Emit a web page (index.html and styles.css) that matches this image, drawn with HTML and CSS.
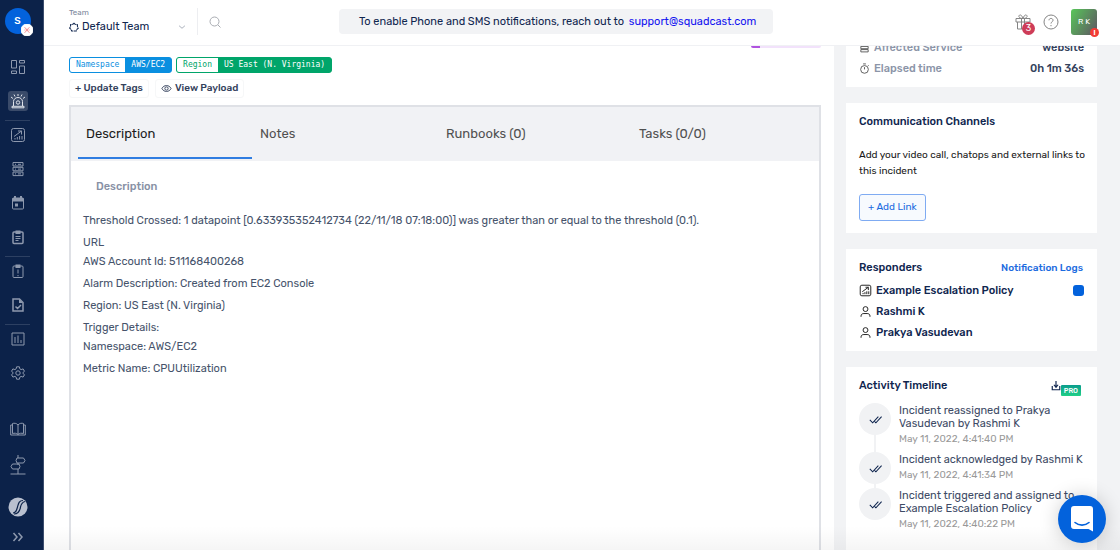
FILE: index.html
```html
<!DOCTYPE html>
<html lang="en">
	<head>
		<meta charset="utf-8">
		<title>Incident</title>
		<link rel="stylesheet" href="styles.css">
	</head>
	<body>
		<svg class="defs" aria-hidden="true">
			<symbol id="policy" viewBox="0 0 16 16"><rect x="1.500" y="1.500" width="13" height="13" rx="2"/><path d="M4 9.500L11.500 4M8 4h3.500v3.500M5 12.500v-1.500M7.300 12.500v-2.500M9.600 12.500V9M12 12.500V9"/></symbol>
			<symbol id="user" viewBox="0 0 16 16"><circle cx="8" cy="5" r="3"/><path d="M2.500 14.500v-1c0-2 1.500-3 3.500-3h4c2 0 3.500 1 3.500 3v1"/></symbol>
			<symbol id="checks" viewBox="0 0 16 16"><path d="M1 8.500l3.500 3.500 7-7.500M6.500 10l2 2 7-7.500"/></symbol>
		</svg>
		<div class="app">
			<aside class="sidebar">
				<a class="org" href="#" aria-label="Organization">S
					<svg class="org-badge" viewBox="0 0 12 12"><circle cx="6" cy="6" r="6" fill="#fff"/><path d="M3.500 3.500c1.500 0 3.500 5 5 5M3.500 8.500c1.500 0 3.500-5 5-5M3.500 6h1M7.500 6h1" stroke="#f58a8d" fill="none"/></svg>
				</a>
				<ul class="nav">
					<li><a href="#" aria-label="Dashboard"><svg viewBox="0 0 16 16"><path d="M1.500 1.500h5v7.500h-5zM1.500 12h5v2.500h-5zM9.500 1.500h5v2.500h-5zM9.500 7h5v7.500h-5z"/></svg></a></li>
					<li><a class="active" href="#" aria-label="Incidents"><svg viewBox="0 0 16 16"><path d="M3.500 13V8.500a4.500 4 0 0 1 9 0V13M2 14.800v-1.500h12v1.500zM8 1v2M4 1.500l1 2M12 1.500l-1 2M1 4l2 1.500M15 4l-2 1.500"/><circle cx="8" cy="9.500" r="1.700"/></svg></a></li>
					<li class="split"><a href="#" aria-label="Escalation policies"><svg><use href="#policy"/></svg></a></li>
					<li><a href="#" aria-label="Services"><svg viewBox="0 0 16 16"><path d="M3 1.500h10v3.500H3zM3 6.300h10v3.500H3zM3 11.100h10v3.500H3zM5 3.300h1M5 8.100h1M5 12.900h1M8 3.300h3M8 8.100h3M8 12.900h3"/></svg></a></li>
					<li><a href="#" aria-label="Schedules"><svg viewBox="0 0 16 16"><rect x="2.500" y="3" width="11" height="11" rx="1"/><path class="fill" d="M2.500 3h11v3.500h-11zM4 1h2v3H4zM10 1h2v3h-2zM5 8.500h3v3H5z"/></svg></a></li>
					<li><a href="#" aria-label="Postmortems"><svg viewBox="0 0 16 16"><rect class="bold" x="3" y="3" width="10" height="11.500" rx="1"/><path class="fill" d="M5.500 1.500h5v3.500h-5z"/><path d="M5.500 7.500h5M5.500 9.500h5M5.500 11.500h3"/></svg></a></li>
					<li class="split"><a href="#" aria-label="Runbooks"><svg viewBox="0 0 16 16"><rect x="3" y="3" width="10" height="11.500" rx="1"/><path class="fill" d="M5.500 1.500h5v3.500h-5z"/><path d="M8 6.500v4M8 12v1.200"/></svg></a></li>
					<li><a href="#" aria-label="Status page"><svg viewBox="0 0 16 16"><path class="bold" d="M3 2h6.500L13 5.500V14H3zM5.500 9.500l2 2L11 8"/><path class="fill" d="M9 2v4h4z"/></svg></a></li>
					<li class="split"><a href="#" aria-label="Analytics"><svg viewBox="0 0 16 16"><path d="M2 2h12v12H2zM5 12V6M8 12V4.500M11 12V9"/></svg></a></li>
					<li><a href="#" aria-label="Settings"><svg viewBox="0 0 16 16"><circle cx="8" cy="8" r="2.200"/><path d="M6.600 1.800h2.800l.4 2 1.300.8 2-.7 1.400 2.400-1.600 1.300v.8l1.600 1.300-1.400 2.400-2-.7-1.300.8-.4 2H6.600l-.4-2-1.300-.8-2 .7-1.400-2.400 1.600-1.300v-.8L1.500 6.300l1.400-2.400 2 .7 1.300-.8z"/></svg></a></li>
				</ul>
				<ul class="nav nav-bottom">
					<li><a href="#" aria-label="Docs"><svg viewBox="0 0 16 16"><path d="M8 4C6.500 2 4 2 2.500 2.500v10C4.500 12 6.500 12 8 13.500 9.500 12 11.500 12 13.500 12.500v-10C12 2 9.500 2 8 4v9.500M2.500 4H.7v10h14.600V4h-1.800"/></svg></a></li>
					<li><a href="#" aria-label="Guides"><svg class="tall" viewBox="0 0 16 20"><path d="M8 0v3M8 8v2M8 14v5M.5 19h15M7 3h6.500L15 5.500 13.500 8H7L6 5.500zM9 9H2.500L1 11.500 2.500 14H9l1-2.500z"/></svg></a></li>
					<li class="brand-item"><a href="#" aria-label="Squadcast"><svg class="brand" viewBox="0 0 20 20"><circle cx="10" cy="10" r="9.500" fill="#b9c0cf" stroke="none"/><path d="M15 3.500c-4 0-4.500 3-5.500 6.500s-1.500 6-4.500 6" stroke="#0c2249" stroke-width="1.200"/><path d="M17 4.500c-4 1-4 3.500-4.700 6.500s-2.300 6-6.300 6" stroke="#0c2249" stroke-width="1.200"/></svg></a></li>
					<li><a href="#" aria-label="Expand menu"><svg viewBox="0 0 16 16"><path class="bold" d="M3.500 4L7 8l-3.500 4M8.500 4L12 8l-3.500 4"/></svg></a></li>
				</ul>
			</aside>

			<div class="page">
				<header class="header">
					<div class="team">
						<label for="team">Team</label>
						<div class="team-select">
							<svg viewBox="0 0 12 12"><path d="M6 1.500l1.500 1.300 2.500.3.200 2.500 1 1.800-1.700 1.500-.7 1.800H6 3.200l-.7-1.800L.8 7.400l1-1.800L2 3.100l2.500-.3z" stroke-width="1.300" stroke-dasharray="3.500 .7"/></svg>
							<select id="team"><option>Default Team</option></select>
							<svg class="chevron" viewBox="0 0 12 12"><path d="M2.500 4.500L6 7.500l3.500-3"/></svg>
						</div>
					</div>
					<button class="search" aria-label="Search"><svg viewBox="0 0 12 12"><circle cx="5.500" cy="5.500" r="4.500"/><path d="M9 9l2.500 2.500"/></svg></button>
					<p class="banner">To enable Phone and SMS notifications, reach out to <a href="#">support@squadcast.com</a></p>
					<div class="tools">
						<button class="gift" aria-label="What's new"><svg viewBox="0 0 16 16"><path d="M1 4.500h14V8H1zM2.500 8v7h11V8M6.500 4.500V15M9.500 4.500V15M8 4.500C3 4.500 3 .8 5.500 1 7 1.200 8 4.500 8 4.500S9 1.200 10.500 1C13 .8 13 4.500 8 4.500z"/></svg><span class="count">3</span></button>
						<button aria-label="Help"><svg viewBox="0 0 16 16"><circle cx="8" cy="8" r="7"/><path d="M6 6.300c0-2.500 4-2.500 4 0C10 7.800 8 7.800 8 9.500M8 11v1.200"/></svg></button>
						<a class="avatar" href="#">R K<span class="alert">!</span></a>
					</div>
				</header>

				<div class="body">
					<main class="content">
						<div class="status-chip"></div>
						<div class="tags">
							<span class="tag"><span class="key">Namespace</span><span class="value">AWS/EC2</span></span>
							<span class="tag green"><span class="key">Region</span><span class="value">US East (N. Virginia)</span></span>
						</div>
						<div class="tag-actions">
							<button>+ Update Tags</button>
							<button><svg viewBox="0 0 12 12"><path d="M1 6c2-4.300 8-4.300 10 0-2 4.300-8 4.300-10 0z"/><circle cx="6" cy="6" r="1.800"/></svg>View Payload</button>
						</div>
						<section class="panel">
							<div class="tabs" role="tablist">
								<button class="tab active" role="tab">Description</button>
								<button class="tab" role="tab">Notes</button>
								<button class="tab" role="tab">Runbooks (0)</button>
								<button class="tab" role="tab">Tasks (0/0)</button>
							</div>
							<div class="description">
								<h2>Description</h2>
								<p>Threshold Crossed: 1 datapoint [0.633935352412734 (22/11/18 07:18:00)] was greater than or equal to the threshold (0.1).</p>
								<p>URL<br>AWS Account Id: 511168400268</p>
								<p>Alarm Description: Created from EC2 Console</p>
								<p>Region: US East (N. Virginia)</p>
								<p>Trigger Details:<br>Namespace: AWS/EC2</p>
								<p>Metric Name: CPUUtilization</p>
							</div>
						</section>
					</main>

					<aside class="side">
						<section class="card facts">
							<dl>
								<div>
									<dt><svg viewBox="0 0 12 12"><path d="M2 1.500h8v2.500H2zM2 4.800h8v2.500H2zM2 8.300h8v2.500H2z"/></svg>Affected Service</dt>
									<dd>website</dd>
								</div>
								<div>
									<dt><svg viewBox="0 0 12 12"><circle cx="6" cy="7" r="4.200"/><path d="M6 4.500V7M4.500 1h3M10 2.500l.8.8"/></svg>Elapsed time</dt>
									<dd>0h 1m 36s</dd>
								</div>
							</dl>
						</section>
						<section class="card">
							<h3>Communication Channels</h3>
							<p>Add your video call, chatops and external links to this incident</p>
							<button class="add-link">+ Add Link</button>
						</section>
						<section class="card responders">
							<div class="card-head">
								<h3>Responders</h3>
								<a href="#">Notification Logs</a>
							</div>
							<ul>
								<li><svg><use href="#policy"/></svg>Example Escalation Policy<span class="marker"></span></li>
								<li><svg><use href="#user"/></svg>Rashmi K</li>
								<li><svg><use href="#user"/></svg>Prakya Vasudevan</li>
							</ul>
						</section>
						<section class="card timeline">
							<div class="card-head">
								<h3>Activity Timeline</h3>
								<button class="download" aria-label="Download"><svg viewBox="0 0 12 12"><path d="M6 0v7M3.500 4.500L6 7.500l2.500-3M1.500 6v4.500h9V6"/></svg><span class="pro">PRO</span></button>
							</div>
							<ol>
								<li>
									<span class="dot"><svg><use href="#checks"/></svg></span>
									<div><p>Incident reassigned to Prakya Vasudevan by Rashmi K</p><time>May 11, 2022, 4:41:40 PM</time></div>
								</li>
								<li>
									<span class="dot"><svg><use href="#checks"/></svg></span>
									<div><p>Incident acknowledged by Rashmi K</p><time>May 11, 2022, 4:41:34 PM</time></div>
								</li>
								<li>
									<span class="dot"><svg><use href="#checks"/></svg></span>
									<div><p>Incident triggered and assigned to Example Escalation Policy</p><time>May 11, 2022, 4:40:22 PM</time></div>
								</li>
							</ol>
						</section>
					</aside>
				</div>
			</div>
		</div>
		<button class="chat" aria-label="Open chat"><svg viewBox="0 0 24 28"><path d="M4 1h16a3 3 0 0 1 3 3v22.500L18.500 24H4a3 3 0 0 1-3-3V4a3 3 0 0 1 3-3z" fill="#fff"/><path d="M5 17.500c4 3.500 10 3.500 14 0" stroke="#0362dc" stroke-width="1.600" stroke-linecap="round" fill="none"/></svg></button>
	</body>
</html>
```
FILE: styles.css
```css
* {
	margin: 0;
	padding: 0;
	box-sizing: border-box;
}
body {
	font-family: Rubik, Roboto, "Liberation Sans", sans-serif;
	font-size: 11px;
	color: #10264f;
	background-color: #fff;
	overflow: hidden;
}
ul, ol {
	list-style: none;
}
a {
	text-decoration: none;
}
button, select {
	font: inherit;
	color: inherit;
	border: none;
	background: none;
	cursor: pointer;
}
svg {
	display: block;
	flex: none;
	fill: none;
	stroke: currentColor;
}
.defs {
	position: absolute;
	width: 0;
	height: 0;
}
.app {
	display: flex;
	height: 100vh;
}

/* sidebar */
.sidebar {
	flex: none;
	width: 44px;
	padding: 8px 8px 0 0;
	background-color: #0c2249;
	border-right: 1px solid #3c4d6d;
}
.org {
	position: relative;
	display: block;
	width: 26px;
	margin: 0 auto;
	border-radius: 50%;
	background-color: #0362dc;
	color: #fff;
	font-size: 10px;
	font-weight: 500;
	line-height: 26px;
	text-align: center;
}
.org-badge {
	position: absolute;
	right: -2px;
	bottom: -2px;
	width: 12px;
	height: 12px;
}
.nav {
	margin-top: 18px;
	padding: 0 5px;
}
.nav li {
	height: 34px;
	padding-top: 5px;
}
.nav .split {
	padding-top: 4px;
	border-top: 1px solid #2d4062;
}
.nav a {
	display: flex;
	align-items: center;
	justify-content: center;
	width: 20px;
	height: 20px;
	margin: 0 auto;
	border-radius: 3px;
	color: #8e99ae;
}
.nav .active {
	color: #dfe3ea;
	background-color: #3a4b6a;
}
.nav svg {
	width: 16px;
	height: 16px;
}
.nav .fill {
	fill: currentColor;
	stroke: none;
}
.nav .bold {
	stroke-width: 1.5;
}
.nav-bottom {
	margin-top: 22px;
}
.nav-bottom li {
	height: 36px;
}
.nav-bottom .brand-item {
	padding-top: 11px;
}
.nav-bottom .tall, .nav-bottom .brand {
	height: 20px;
}
.nav-bottom .brand {
	width: 20px;
}

/* header */
.page {
	position: relative;
	flex: 1;
	min-width: 0;
	display: flex;
	flex-direction: column;
}
.page::after {
	content: "";
	position: absolute;
	left: 0;
	right: 0;
	bottom: 0;
	height: 24px;
	background: linear-gradient(transparent, rgba(0, 0, 0, .04));
	pointer-events: none;
}
.header {
	flex: none;
	display: flex;
	align-items: center;
	height: 46px;
	padding: 0 23px 2px 25px;
	background-color: #fff;
	border-bottom: 1px solid #f0f1f4;
	z-index: 1;
}
.team {
	width: 129px;
	padding-right: 10px;
	border-right: 1px solid #edeef1;
}
.team label {
	display: block;
	font-size: 8px;
	line-height: 10px;
	color: #7c879c;
}
.team-select {
	display: flex;
	align-items: center;
	gap: 3px;
	padding-top: 1px;
}
.team-select svg {
	width: 10px;
	height: 10px;
}
.team-select .chevron {
	color: #9aa1ae;
}
.team select {
	flex: 1;
	min-width: 0;
	appearance: none;
	line-height: 16px;
}
.search {
	margin-left: 11px;
	color: #a9acb2;
}
.search svg {
	width: 12px;
	height: 12px;
}
.banner {
	margin: 0 auto 0 118px;
	padding: 0 17px 0 20px;
	border-radius: 4px;
	background-color: #f2f3f5;
	line-height: 25px;
	white-space: nowrap;
}
.banner a {
	margin-left: 2px;
	color: #1414f0;
}
.tools {
	display: flex;
	align-items: center;
	gap: 12px;
	color: #858585;
}
.tools svg {
	width: 16px;
	height: 16px;
}
.gift {
	position: relative;
}
.count, .alert {
	position: absolute;
	border-radius: 50%;
	color: #fff;
	text-align: center;
}
.count {
	right: -4px;
	bottom: -5px;
	width: 13px;
	font-size: 9px;
	line-height: 13px;
	background-color: #ce3c58;
}
.avatar {
	position: relative;
	width: 26px;
	border-radius: 3px;
	background: linear-gradient(120deg, #57c759, #5f5363);
	color: #fff;
	font-size: 8px;
	line-height: 26px;
	text-align: center;
}
.alert {
	right: -2px;
	bottom: -2px;
	width: 9px;
	font-size: 7px;
	font-weight: 700;
	line-height: 9px;
	background-color: #f23c35;
}

/* incident */
.body {
	flex: 1;
	min-height: 0;
	display: flex;
}
.content {
	flex: 1;
	min-width: 0;
	display: flex;
	flex-direction: column;
	margin-top: -20px;
	padding: 0 13px 0 25px;
}
.status-chip {
	flex: none;
	align-self: flex-end;
	width: 70px;
	height: 22px;
	border-radius: 2px;
	background: linear-gradient(90deg, #b053df 9px, #f2e2fb 9px);
}
.tags {
	display: flex;
	gap: 4px;
	margin-top: 9px;
}
.tag {
	display: flex;
	border: 1px solid #0a8fe0;
	border-radius: 3px;
	background-color: #0a8fe0;
	color: #0a8fe0;
	font-family: "DejaVu Sans Mono", monospace;
	font-size: 8px;
	line-height: 14px;
}
.tag span {
	padding: 0 6px;
}
.tag .key {
	border-radius: 2px 0 0 2px;
	background-color: #fff;
}
.tag .value {
	color: #fff;
}
.tag.green {
	border-color: #00a56a;
	background-color: #00a56a;
	color: #00a56a;
}
.tag-actions {
	display: flex;
	gap: 6px;
	margin-top: 6px;
}
.tag-actions button {
	display: flex;
	align-items: center;
	gap: 3px;
	padding: 0 5px;
	border: 1px solid #f6f7f8;
	border-radius: 3px;
	color: #33415c;
	font-size: 10px;
	font-weight: 500;
	line-height: 17px;
}
.tag-actions svg {
	width: 11px;
	height: 11px;
}
.panel {
	flex: 1;
	margin-top: 7px;
	border: 2px solid #dfe1e6;
	border-bottom: none;
}
.tabs {
	display: grid;
	grid-template-columns: 174fr 186fr 193fr 181fr;
	padding: 0 7px 2px;
	background-color: #f1f2f5;
}
.tab {
	height: 52px;
	padding: 2px 8px 0;
	border-bottom: 2px solid transparent;
	color: #505050;
	font-size: 13px;
	text-align: left;
}
.tab.active {
	border-color: #2f7de1;
	color: #1c1c1c;
}
.description {
	display: flex;
	flex-direction: column;
	gap: 3px;
	padding: 16px 12px;
	color: #46536b;
	line-height: 19px;
}
.description h2 {
	margin-bottom: 12px;
	padding-left: 13px;
	color: #8891a5;
	font-size: 11px;
	font-weight: 500;
}

/* right column */
.side {
	flex: none;
	display: flex;
	flex-direction: column;
	gap: 16px;
	width: 286px;
	margin-top: -21px;
	padding: 0 23px 0 12px;
	background-color: #f2f3f5;
}
.card {
	padding: 12px 13px;
	background-color: #fff;
}
.card h3 {
	font-size: 11px;
	font-weight: 500;
	line-height: 14px;
}
.card p {
	margin: 18px -6px 15px 0;
	color: #1a1a1a;
	font-size: 10px;
	line-height: 16px;
}
.facts, .responders {
	padding-bottom: 8px;
}
.facts div {
	display: flex;
	justify-content: space-between;
	line-height: 21px;
	font-weight: 500;
}
.facts dt {
	display: flex;
	align-items: center;
	gap: 4px;
	color: #8c95a8;
}
.facts dd {
	color: #33415c;
}
.facts svg {
	width: 11px;
	height: 11px;
	color: #555;
}
.add-link {
	padding: 0 8px;
	border: 1px solid #7fabf2;
	border-radius: 3px;
	background-color: #f7fafe;
	color: #1b6be0;
	font-size: 10px;
	line-height: 25px;
}
.card-head {
	display: flex;
	align-items: center;
	justify-content: space-between;
	height: 14px;
}
.card-head a {
	padding: 0 1px;
	color: #1b6be0;
	font-size: 10px;
	font-weight: 500;
}
.responders ul {
	margin-top: 5px;
}
.responders li {
	display: flex;
	align-items: center;
	gap: 4px;
	font-weight: 500;
	line-height: 21px;
}
.responders svg {
	width: 13px;
	height: 13px;
	color: #222;
	stroke-width: 1.2;
}
.marker {
	width: 11px;
	height: 11px;
	margin-left: auto;
	border-radius: 3px;
	background-color: #0362dc;
}
.timeline {
	flex: 1;
}
.download {
	display: flex;
	align-items: center;
	padding-right: 3px;
}
.download svg {
	width: 10px;
	height: 12px;
	stroke-width: 1.4;
}
.pro {
	margin-top: 8px;
	padding: 0 3px;
	border-radius: 1px;
	background: linear-gradient(#0a9c8c, #20d087);
	color: #fff;
	font-size: 7px;
	font-weight: 500;
	line-height: 11px;
}
.timeline ol {
	margin-top: 10px;
}
.timeline li {
	display: flex;
	gap: 8px;
	padding-bottom: 6px;
	background: linear-gradient(#f1f2f4, #f1f2f4) 15px 0 / 2px 100% no-repeat;
}
.timeline li:last-child {
	background: none;
}
.timeline li div {
	padding-top: 1px;
}
.dot {
	flex: none;
	display: flex;
	align-items: center;
	justify-content: center;
	width: 32px;
	height: 32px;
	margin-bottom: -4px;
	border-radius: 50%;
	background-color: #f1f2f4;
}
.dot svg {
	width: 13px;
	height: 13px;
	stroke-width: 1.3;
}
.timeline p {
	margin: 0 -6px 3px 0;
	color: #3e4b66;
	font-size: 11px;
	line-height: 13px;
}
.timeline time {
	display: block;
	color: #999;
	font-size: 10px;
	line-height: 13px;
}
.chat {
	position: fixed;
	right: 14px;
	bottom: 7px;
	display: flex;
	align-items: center;
	justify-content: center;
	width: 48px;
	height: 48px;
	border-radius: 50%;
	background-color: #0362dc;
	box-shadow: 0 1px 20px rgba(0, 0, 0, .2);
}
.chat svg {
	width: 24px;
	height: 28px;
	stroke: none;
}
```
